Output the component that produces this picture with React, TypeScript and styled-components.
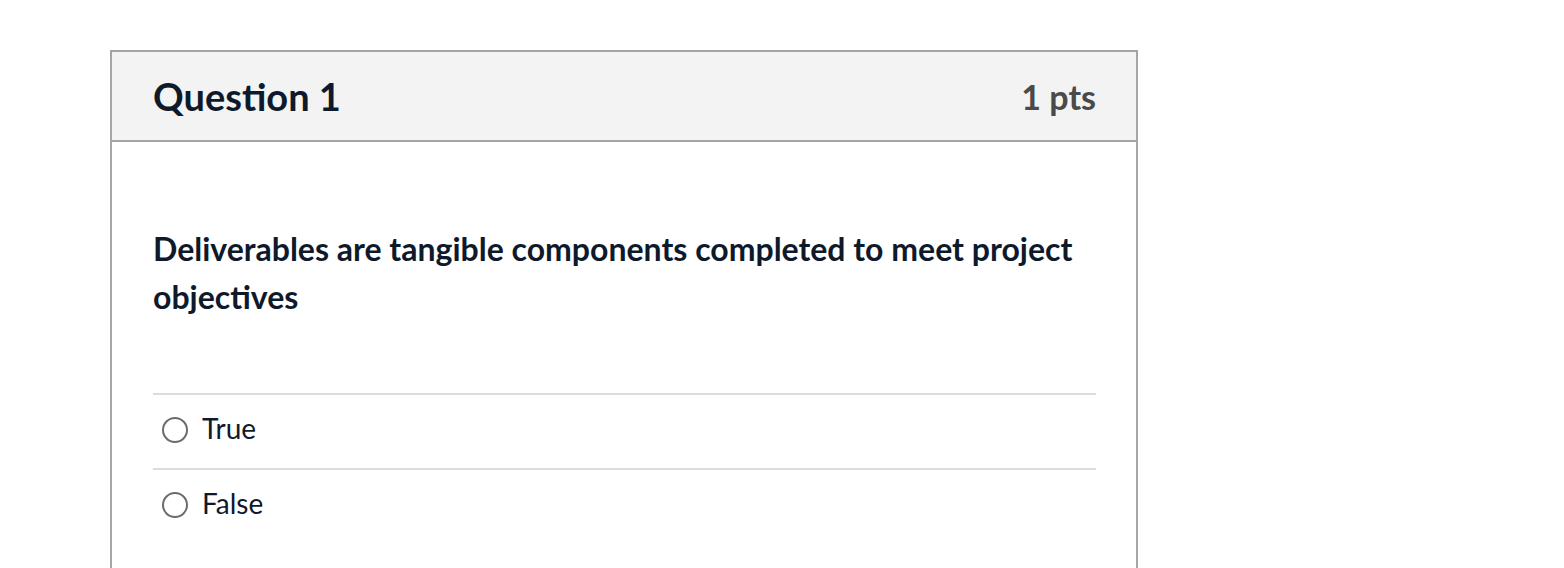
import React from "react";
import styled, { createGlobalStyle } from "styled-components";

const Global = createGlobalStyle`
  html, body { margin: 0; padding: 0; background: #ffffff; }
  body { font-family: Lato, "Noto Sans", sans-serif; }
`;

const Page = styled.div`
  padding: 50px 0 0 110px;
  height: 568px;
  box-sizing: border-box;
  overflow: hidden;
`;

const Card = styled.div`
  width: 1028px;
  box-sizing: border-box;
  border: 2px solid #a5a5a5;
  border-bottom: none;
  min-height: 600px;
`;

const Header = styled.div`
  display: flex;
  justify-content: space-between;
  align-items: center;
  height: 88px;
  padding: 0 40px 0 41px;
  background: #f3f3f3;
  border-bottom: 2px solid #a5a5a5;
`;

const Title = styled.h2`
  margin: 0;
  font-size: 38px;
  font-weight: 700;
  color: #0e1a2b;
`;

const Points = styled.span`
  font-size: 34px;
  font-weight: 700;
  color: #4a4a4a;
`;

const Body = styled.div`
  padding: 83px 40px 0 41px;
`;

const QuestionText = styled.p`
  margin: 0 0 72px;
  font-size: 32px;
  line-height: 48px;
  font-weight: 700;
  color: #0e1a2b;
`;

const Answer = styled.label`
  display: flex;
  align-items: center;
  gap: 14px;
  height: 73px;
  box-sizing: content-box;
  padding: 0 0 0 9px;
  border-top: 2px solid #dcdcdc;
  font-size: 28px;
  color: #0e1a2b;
`;

const AnswerInner = styled.span`
  display: flex;
  align-items: center;
  gap: 14px;
  margin-top: -7px;
`;

const Radio = styled.span`
  width: 22px;
  height: 22px;
  border: 2px solid #6b6b6b;
  border-radius: 50%;
  flex: none;
  margin-top: 3px;
`;

export default function App() {
  return (
    <>
      <Global />
      <Page>
        <Card>
          <Header>
            <Title>Question 1</Title>
            <Points>1 pts</Points>
          </Header>
          <Body>
            <QuestionText>
              Deliverables are tangible components completed to meet project objectives
            </QuestionText>
            <Answer>
              <AnswerInner>
                <Radio />
                True
              </AnswerInner>
            </Answer>
            <Answer>
              <AnswerInner>
                <Radio />
                False
              </AnswerInner>
            </Answer>
          </Body>
        </Card>
      </Page>
    </>
  );
}
